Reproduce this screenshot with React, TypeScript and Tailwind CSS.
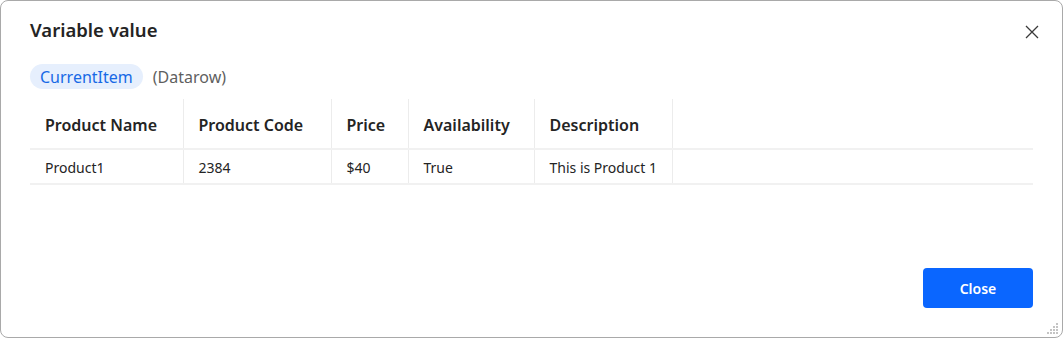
const columns = [
	{ title: "Product Name", width: "w-[153px]" },
	{ title: "Product Code", width: "w-[148px]" },
	{ title: "Price", width: "w-[77px]" },
	{ title: "Availability", width: "w-[126px]" },
	{ title: "Description", width: "w-[138px]" },
];

const row = ["Product1", "2384", "$40", "True", "This is Product 1"];

function Grip() {
	const dots: [number, number][] = [
		[9, 1],
		[6, 4],
		[9, 4],
		[3, 7],
		[6, 7],
		[9, 7],
		[0, 10],
		[3, 10],
		[6, 10],
		[9, 10],
	];
	return (
		<svg width="12" height="12" viewBox="0 0 12 12" className="absolute right-[3px] bottom-[3px]">
			{dots.map(([x, y], i) => (
				<rect key={i} x={x} y={y} width="2" height="2" fill="#c4c4c4" />
			))}
		</svg>
	);
}

export default function App() {
	return (
		<div
			className="relative w-[1063px] h-[338px] bg-white border border-[#a9a9a9] rounded-lg flex flex-col text-[#242424]"
			style={{ fontFamily: '"Noto Sans", "Open Sans", sans-serif' }}
		>
			<div className="flex items-center justify-between pl-[29px] pr-[23px] pt-[13px] h-[46px]">
				<h2 className="text-[18.5px] font-semibold leading-none">Variable value</h2>
				<button className="text-[#242424] mt-[2px]">
					<svg width="14" height="14" viewBox="0 0 14 14" fill="none">
						<path d="M1 1L13 13M13 1L1 13" stroke="#3a3a3a" strokeWidth="1.3" />
					</svg>
				</button>
			</div>
			<div className="flex items-center gap-[10px] pl-[29px] mt-[17px]">
				<span className="h-[25px] px-[10px] flex items-center rounded-full bg-[#e6effd] text-[#1769e6] text-[16px]">
					CurrentItem
				</span>
				<span className="text-[16px] text-[#5f5f5f]">(Datarow)</span>
			</div>
			<div className="px-[29px] mt-[10px]">
				<table className="w-full table-fixed border-collapse">
					<thead>
						<tr className="h-[50px] border-b-2 border-[#f1f1f1]">
							{columns.map((c) => (
								<th
									key={c.title}
									className={`${c.width} text-left font-semibold text-[16px] pl-[15px] pt-[3px] border-r border-[#ececec]`}
								>
									{c.title}
								</th>
							))}
							<th />
						</tr>
					</thead>
					<tbody>
						<tr className="h-[35px] border-b-2 border-[#f1f1f1]">
							{row.map((v, i) => (
								<td key={i} className="text-[14px] pl-[15px] pt-[2px] border-r border-[#ececec]">
									{v}
								</td>
							))}
							<td />
						</tr>
					</tbody>
				</table>
			</div>
			<div className="flex-1" />
			<div className="flex justify-end pr-[29px] pb-[29px]">
				<button className="w-[110px] h-[40px] rounded-[4px] bg-[#0a66ff] text-white font-semibold text-[14px]">
					Close
				</button>
			</div>
			<Grip />
		</div>
	);
}
